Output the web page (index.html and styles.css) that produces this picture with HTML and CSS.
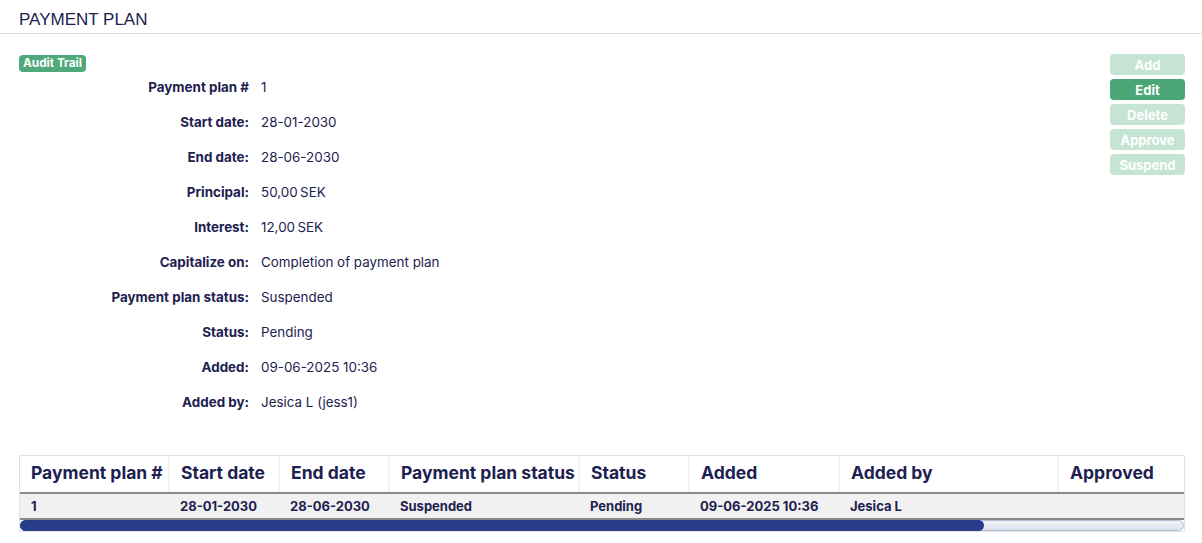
FILE: index.html
```html
<!DOCTYPE html>
<html>
	<head>
		<meta charset="utf-8">
		<title>Payment plan</title>
		<link rel="stylesheet" href="styles.css">
	</head>
	<body>
		<div class="page-title">PAYMENT PLAN</div>

		<div class="content">
			<div class="top">
				<div class="info">
					<span class="badge">Audit Trail</span>
					<div class="details">
						<div class="label">Payment plan #</div><div class="value">1</div>
						<div class="label">Start date:</div><div class="value">28-01-2030</div>
						<div class="label">End date:</div><div class="value">28-06-2030</div>
						<div class="label">Principal:</div><div class="value">50,00&#8239;SEK</div>
						<div class="label">Interest:</div><div class="value">12,00&#8239;SEK</div>
						<div class="label">Capitalize on:</div><div class="value">Completion of payment plan</div>
						<div class="label">Payment plan status:</div><div class="value">Suspended</div>
						<div class="label">Status:</div><div class="value">Pending</div>
						<div class="label">Added:</div><div class="value">09-06-2025 10:36</div>
						<div class="label">Added by:</div><div class="value">Jesica L (jess1)</div>
					</div>
				</div>
				<div class="actions">
					<button class="btn" disabled>Add</button>
					<button class="btn active">Edit</button>
					<button class="btn" disabled>Delete</button>
					<button class="btn" disabled>Approve</button>
					<button class="btn" disabled>Suspend</button>
				</div>
			</div>

			<div class="table-wrap">
				<div class="table-scroll">
					<table class="grid">
						<colgroup>
							<col class="c1"><col class="c2"><col class="c3"><col class="c4">
							<col class="c5"><col class="c6"><col class="c7"><col class="c8">
						</colgroup>
						<thead>
							<tr>
								<th>Payment plan #</th>
								<th>Start date</th>
								<th>End date</th>
								<th>Payment plan status</th>
								<th>Status</th>
								<th>Added</th>
								<th>Added by</th>
								<th>Approved</th>
							</tr>
						</thead>
						<tbody>
							<tr>
								<td>1</td>
								<td>28-01-2030</td>
								<td>28-06-2030</td>
								<td>Suspended</td>
								<td>Pending</td>
								<td>09-06-2025 10:36</td>
								<td>Jesica L</td>
								<td></td>
							</tr>
						</tbody>
					</table>
				</div>
				<div class="scrollbar">
					<div class="thumb" style="width: 83%"></div>
				</div>
			</div>
		</div>
	</body>
</html>
```

FILE: styles.css
```css
* {
	margin: 0;
	padding: 0;
	box-sizing: border-box;
}
body {
	font-family: Inter, "Noto Sans", sans-serif;
	color: #1d2150;
	background: #fff;
}
.page-title {
	height: 34px;
	padding: 10px 19px 0;
	font-family: "Liberation Sans", Arial, sans-serif;
	font-size: 17px;
	border-bottom: 1px solid #dedede;
}
.content {
	padding: 20px 17px 0 19px;
}
.top {
	display: flex;
	justify-content: space-between;
	align-items: flex-start;
}
.info {
	display: flex;
	flex-direction: column;
	align-items: flex-start;
}
.badge {
	display: block;
	margin-top: 1px;
	background: #4fa97a;
	color: #fff;
	font-size: 11.8px;
	font-weight: 700;
	line-height: 17px;
	padding: 0 4px;
	border-radius: 4px;
}
.details {
	display: grid;
	grid-template-columns: 230px auto;
	column-gap: 12px;
	margin-top: -2px;
	font-size: 13.4px;
}
.details .label,
.details .value {
	height: 35px;
	line-height: 35px;
}
.details .label {
	text-align: right;
	font-weight: 700;
}
.actions {
	display: flex;
	flex-direction: column;
	gap: 4px;
}
.btn {
	width: 75px;
	height: 21px;
	border: 0;
	border-radius: 4px;
	background: #c6e4d4;
	color: #fff;
	font-family: Inter, "Noto Sans", sans-serif;
	font-size: 13px;
	font-weight: 700;
}
.btn.active {
	background: #4aa577;
}

/* 表格 */
.table-wrap {
	margin-top: 35px;
	border: 1px solid #e2e2e2;
}
.table-scroll {
	overflow: hidden;
}
.grid {
	width: 1408px;
	table-layout: fixed;
	border-collapse: collapse;
	white-space: nowrap;
}
.grid th {
	height: 37px;
	padding: 0 11px 3px;
	text-align: left;
	font-size: 17.5px;
	font-weight: 700;
	border-left: 2px solid #f2f2f2;
	border-bottom: 2px solid #8a8a8a;
}
.grid th:first-child {
	border-left: 0;
}
.grid td {
	height: 26px;
	padding: 0 11px;
	font-size: 13px;
	font-weight: 700;
	background: #f1f1f1;
	border-bottom: 2px solid #8a8a8a;
}
.c1 { width: 149px; }
.c2 { width: 110px; }
.c3 { width: 110px; }
.c4 { width: 190px; }
.c5 { width: 110px; }
.c6 { width: 150px; }
.c7 { width: 219px; }
.c8 { width: 370px; }

/* 滚动条 */
.scrollbar {
	height: 11px;
	border: 1px solid #b3bbd9;
	border-radius: 6px;
	background: linear-gradient(#f3f4fa, #dde1f0);
}
.scrollbar .thumb {
	margin-left: -1px;
	margin-top: -1px;
	height: 11px;
	background: #283c8c;
	border-radius: 6px;
}
```
